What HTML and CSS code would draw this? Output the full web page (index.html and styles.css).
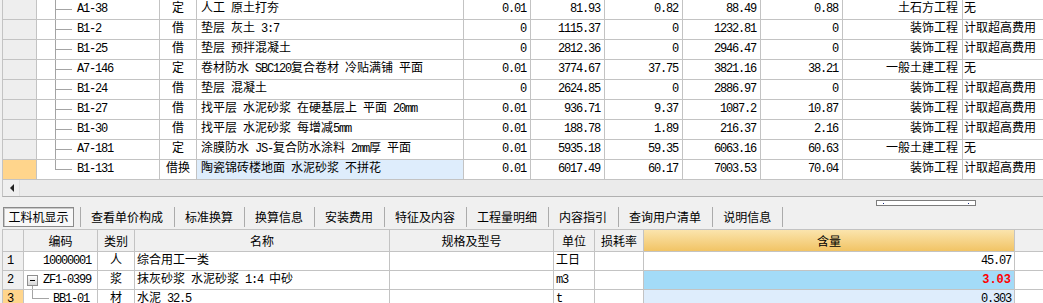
FILE: index.html
```html
<!DOCTYPE html>
<html lang="zh-CN">
<head>
<meta charset="utf-8">
<title>工料机显示</title>
<link rel="stylesheet" href="styles.css">
</head>
<body>
<div class="top">
  <div class="c h"></div><div class="c code m tr">A1-38</div><div class="c ct">定</div><div class="c nm">人工 原土打夯</div><div class="c r m">0.01</div><div class="c r m">81.93</div><div class="c r m">0.82</div><div class="c r m">88.49</div><div class="c r m">0.88</div><div class="c r">土石方工程</div><div class="c l">无</div>
  <div class="c h"></div><div class="c code m tr">B1-2</div><div class="c ct">借</div><div class="c nm">垫层 灰土 <span class="m">3:7</span></div><div class="c r m">0</div><div class="c r m">1115.37</div><div class="c r m">0</div><div class="c r m">1232.81</div><div class="c r m">0</div><div class="c r">装饰工程</div><div class="c l">计取超高费用</div>
  <div class="c h"></div><div class="c code m tr">B1-25</div><div class="c ct">借</div><div class="c nm">垫层 预拌混凝土</div><div class="c r m">0</div><div class="c r m">2812.36</div><div class="c r m">0</div><div class="c r m">2946.47</div><div class="c r m">0</div><div class="c r">装饰工程</div><div class="c l">计取超高费用</div>
  <div class="c h"></div><div class="c code m tr">A7-146</div><div class="c ct">定</div><div class="c nm">卷材防水 <span class="m">SBC120</span>复合卷材 冷贴满铺 平面</div><div class="c r m">0.01</div><div class="c r m">3774.67</div><div class="c r m">37.75</div><div class="c r m">3821.16</div><div class="c r m">38.21</div><div class="c r">一般土建工程</div><div class="c l">无</div>
  <div class="c h"></div><div class="c code m tr">B1-24</div><div class="c ct">借</div><div class="c nm">垫层 混凝土</div><div class="c r m">0</div><div class="c r m">2624.85</div><div class="c r m">0</div><div class="c r m">2886.97</div><div class="c r m">0</div><div class="c r">装饰工程</div><div class="c l">计取超高费用</div>
  <div class="c h"></div><div class="c code m tr">B1-27</div><div class="c ct">借</div><div class="c nm">找平层 水泥砂浆 在硬基层上 平面 <span class="m">20mm</span></div><div class="c r m">0.01</div><div class="c r m">936.71</div><div class="c r m">9.37</div><div class="c r m">1087.2</div><div class="c r m">10.87</div><div class="c r">装饰工程</div><div class="c l">计取超高费用</div>
  <div class="c h"></div><div class="c code m tr">B1-30</div><div class="c ct">借</div><div class="c nm">找平层 水泥砂浆 每增减<span class="m">5mm</span></div><div class="c r m">0.01</div><div class="c r m">188.78</div><div class="c r m">1.89</div><div class="c r m">216.37</div><div class="c r m">2.16</div><div class="c r">装饰工程</div><div class="c l">计取超高费用</div>
  <div class="c h"></div><div class="c code m tr">A7-181</div><div class="c ct">定</div><div class="c nm">涂膜防水 <span class="m">JS-</span>复合防水涂料 <span class="m">2mm</span>厚 平面</div><div class="c r m">0.01</div><div class="c r m">5935.18</div><div class="c r m">59.35</div><div class="c r m">6063.16</div><div class="c r m">60.63</div><div class="c r">一般土建工程</div><div class="c l">无</div>
  <div class="c h cur"></div><div class="c code m tl">B1-131</div><div class="c ct">借换</div><div class="c nm sel">陶瓷锦砖楼地面 水泥砂浆 不拼花</div><div class="c r m">0.01</div><div class="c r m">6017.49</div><div class="c r m">60.17</div><div class="c r m">7003.53</div><div class="c r m">70.04</div><div class="c r">装饰工程</div><div class="c l">计取超高费用</div>
</div>
<div class="hscroll"><div class="hs-btn"><span class="arrow"></span></div></div>
<div class="tabs">
  <div class="tab-on">工料机显示</div>
  <div class="tab">查看单价构成</div>
  <div class="tab">标准换算</div>
  <div class="tab">换算信息</div>
  <div class="tab">安装费用</div>
  <div class="tab">特征及内容</div>
  <div class="tab">工程量明细</div>
  <div class="tab">内容指引</div>
  <div class="tab">查询用户清单</div>
  <div class="tab">说明信息</div>
  <div class="splitter"></div>
</div>
<div class="low">
  <div class="hd"></div><div class="hd">编码</div><div class="hd">类别</div><div class="hd">名称</div><div class="hd">规格及型号</div><div class="hd">单位</div><div class="hd">损耗率</div><div class="hd amt">含量</div><div class="hd"></div>
  <div class="d num m">1</div><div class="d lc m">10000001</div><div class="d ct">人</div><div class="d nm2">综合用工一类</div><div class="d"></div><div class="d un">工日</div><div class="d"></div><div class="d r m">45.07</div><div class="d"></div>
  <div class="d num m">2</div><div class="d lc2 m"><span class="minus"></span>ZF1-0399</div><div class="d ct">浆</div><div class="d nm2">抹灰砂浆 水泥砂浆 <span class="m">1:4</span> 中砂</div><div class="d"></div><div class="d un m">m3</div><div class="d"></div><div class="d r hl red">3.03</div><div class="d"></div>
  <div class="d num m cur">3</div><div class="d lc3 m">BB1-01</div><div class="d ct">材</div><div class="d nm2">水泥 <span class="m">32.5</span></div><div class="d"></div><div class="d un m">t</div><div class="d"></div><div class="d r m hl2">0.303</div><div class="d"></div>
</div>
</body>
</html>
```

FILE: styles.css
```css
* {
  box-sizing: border-box;
}

body {
  margin: 0;
  width: 1043px;
  height: 303px;
  overflow: hidden;
  background: #f0f0f0;
  color: #000;
  font-family: "Liberation Mono", "Noto Sans CJK SC", monospace;
  font-size: 12px;
  line-height: 19px;
  word-spacing: -1.2px;
}

.m {
  letter-spacing: -1.2px;
}

/* ---------- top grid ---------- */
.top {
  display: grid;
  grid-template-columns: 34px 123px 37px 267px 67px 74px 78px 78px 82px 120px 81px;
  margin-left: 2px;
  border-left: 1px solid #c3c3c3;
  background: #fff;
}

.c {
  height: 20px;
  padding: 0 4px;
  border-right: 1px solid #c3c3c3;
  border-bottom: 1px solid #c3c3c3;
  white-space: nowrap;
  overflow: hidden;
}

.h {
  background: #eeeeee;
}

.cur {
  background: #ffd58c;
}

.code {
  padding-left: 40px;
}

.tr {
  background:
    linear-gradient(#a4a4a4, #a4a4a4) 18px 0 / 1px 100% no-repeat,
    linear-gradient(#a4a4a4, #a4a4a4) 18px 9px / 17px 1px no-repeat;
}

.tl {
  background:
    linear-gradient(#a4a4a4, #a4a4a4) 18px 0 / 1px 10px no-repeat,
    linear-gradient(#a4a4a4, #a4a4a4) 18px 9px / 17px 1px no-repeat;
}

.ct {
  text-align: center;
  padding: 0;
}

.nm {
  padding-left: 4px;
}

.sel {
  background: #deedfc;
}

.r {
  text-align: right;
  padding-right: 4px;
}

.l {
  padding-left: 1px;
}

/* ---------- horizontal scrollbar ---------- */
.hscroll {
  display: flex;
  margin-left: 2px;
  height: 17px;
  border-left: 1px solid #c3c3c3;
  border-bottom: 1px solid #b0b0b0;
  background: #ebebeb;
}

.hs-btn {
  width: 17px;
  display: flex;
  align-items: center;
  padding-left: 7px;
  background: #efefef;
  border-right: 1px solid #e0e0e0;
}

.arrow {
  width: 0;
  height: 0;
  border-right: 4px solid #222;
  border-top: 4px solid transparent;
  border-bottom: 4px solid transparent;
}

/* ---------- tabs ---------- */
.tabs {
  position: relative;
  display: flex;
  align-items: flex-start;
  height: 32px;
  padding-top: 10px;
  font-family: "Noto Sans CJK SC", sans-serif;
}

.tab-on {
  width: 71px;
  height: 20px;
  margin-left: 3px;
  margin-right: 6px;
  line-height: 18px;
  text-align: center;
  border: 1px solid #8a8a8a;
  box-shadow: inset 1px 1px 0 #c8c8c8;
  background: #f8f8f8;
}

.tab {
  height: 20px;
  line-height: 19px;
  padding: 0 11px 0 10px;
  border-left: 1px solid #ababab;
}

.tab:nth-last-child(2) {
  border-right: 1px solid #ababab;
}

.splitter {
  position: absolute;
  left: 876px;
  top: 3px;
  width: 100px;
  height: 6px;
  border: 1px solid #7c7c7c;
  background:
    linear-gradient(#1a2a80, #1a2a80) 6px 2px / 1px 1px no-repeat,
    linear-gradient(#1a2a80, #1a2a80) 91px 2px / 1px 1px no-repeat,
    #fff;
}

/* ---------- lower grid ---------- */
.low {
  display: grid;
  grid-template-columns: 21px 74px 37px 255px 164px 41px 49px 371px 29px;
  margin-left: 2px;
  border-left: 1px solid #c3c3c3;
  border-top: 1px solid #c3c3c3;
  background: #fff;
}

.hd {
  height: 22px;
  line-height: 21px;
  text-align: center;
  background: #f0f0f0;
  border-right: 1px solid #c3c3c3;
  border-bottom: 1px solid #c3c3c3;
  font-family: "Noto Sans CJK SC", sans-serif;
}

.amt {
  background: linear-gradient(#fbe4ad, #f1c465);
}

.d {
  height: 19px;
  line-height: 18px;
  border-right: 1px solid #c3c3c3;
  border-bottom: 1px solid #c3c3c3;
  white-space: nowrap;
  overflow: hidden;
}

.d.r {
  padding-right: 3px;
}

.num {
  padding-left: 4px;
  background: #f0f0f0;
}

.num.cur {
  background: #ffd58c;
}

.lc {
  padding-left: 19px;
}

.lc2 {
  display: flex;
  align-items: center;
  padding-left: 3px;
  background: linear-gradient(#a4a4a4, #a4a4a4) 8px 14px / 1px 5px no-repeat;
}

.minus {
  width: 11px;
  height: 11px;
  margin-right: 5px;
  border: 1px solid #8e8e8e;
  background:
    linear-gradient(#000, #000) center / 5px 1px no-repeat,
    linear-gradient(#ffffff, #d6d6d6);
}

.lc3 {
  padding-left: 29px;
  background:
    linear-gradient(#a4a4a4, #a4a4a4) 8px 0 / 1px 9px no-repeat,
    linear-gradient(#a4a4a4, #a4a4a4) 8px 8px / 17px 1px no-repeat;
}

.nm2 {
  padding-left: 2px;
}

.un {
  padding-left: 2px;
}

.hl {
  background: #a3dbf8;
}

.hl2 {
  background: #deedfc;
}

.red {
  color: #f00;
  font-weight: bold;
}
```
